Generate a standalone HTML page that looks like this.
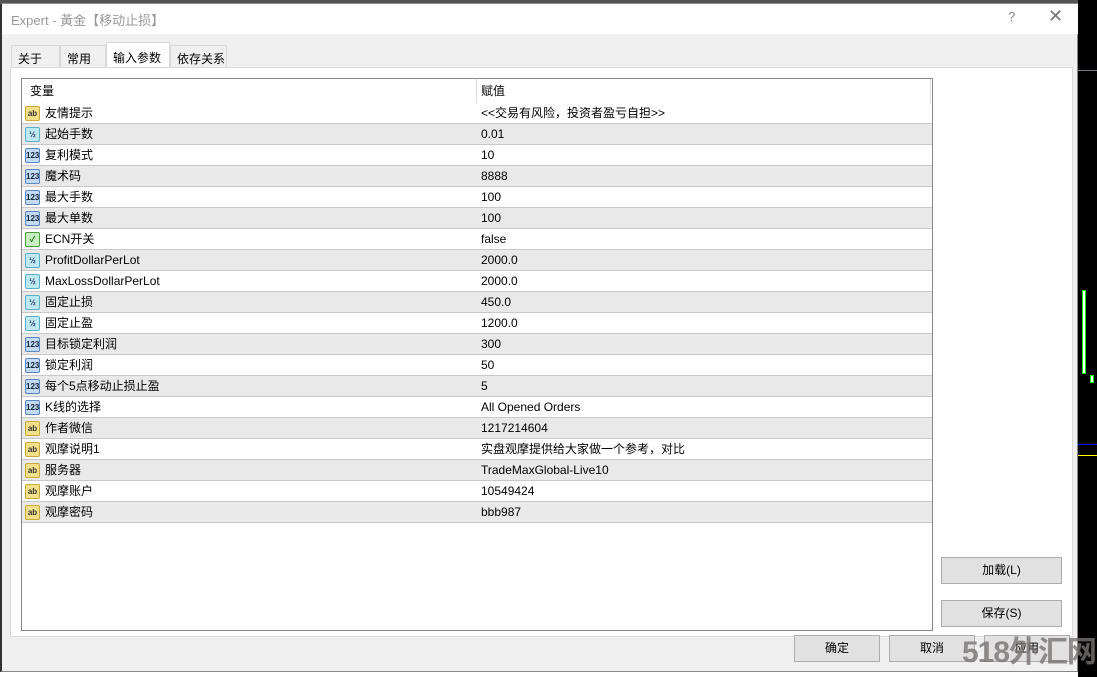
<!DOCTYPE html><html><head><meta charset="utf-8"><style>
*{margin:0;padding:0;box-sizing:border-box}
body{width:1097px;height:677px;overflow:hidden;background:#fff;font-family:"Liberation Sans","Noto Sans CJK SC",sans-serif;font-size:12px;color:#000;position:relative}
.abs{position:absolute}
.dlg{left:0;top:3px;width:1078px;height:669px;background:#f0f0f0;border:1px solid #888;border-left:2px solid #333}
.title{left:0;top:0;width:1076px;height:30px;background:#fff;color:#999;font-size:13px;padding:6px 0 0 9px}
.tab{top:41px;height:23px;border:1px solid #d9d9d9;border-bottom:none;background:#f0f0f0;padding:4px 0 0 6px}
.panel{left:8px;top:63px;width:1063px;height:570px;background:#fff;border:1px solid #d9d9d9}
.tbl{left:19px;top:74px;width:912px;height:553px;border:1px solid #888;background:#fff;overflow:hidden}
.row{position:absolute;left:0;width:910px;height:21px;border-bottom:1px solid #c8c8c8}
.row span{position:absolute;top:0;line-height:20px;height:20px}
.btn{height:27px;background:#e1e1e1;border:1px solid #adadad;text-align:center;line-height:25px}
.ic{position:absolute;left:3px;top:3px;width:15px;height:15px;border-radius:2px;font-size:8px;font-weight:bold;text-align:center;line-height:14px}
</style></head><body>
<div class="abs" style="left:1078px;top:0;width:19px;height:677px;background:#000"></div>
<div class="abs" style="left:1078px;top:70px;width:19px;height:1px;background:#778"></div>
<div class="abs" style="left:1082px;top:290px;width:4px;height:84px;background:#fff;border:1px solid #0f0"></div>
<div class="abs" style="left:1090px;top:375px;width:4px;height:8px;background:#fff;border:1px solid #0f0"></div>
<div class="abs" style="left:1078px;top:444px;width:19px;height:1px;background:#00f"></div>
<div class="abs" style="left:1078px;top:455px;width:19px;height:1px;background:#ff0"></div>
<div class="abs" style="left:0;top:0;width:1078px;height:3px;background:#555"></div>
<div class="abs dlg">
<div class="abs title">Expert - 黃金【移动止损】<span class="abs" style="left:1006px;top:5px;color:#888">?</span><span class="abs" style="left:1046px;top:2px;color:#777;font-size:18px">✕</span></div>
<div class="abs tab" style="left:9px;width:49px">关于</div>
<div class="abs tab" style="left:58px;width:46px">常用</div>
<div class="abs tab" style="left:104px;width:64px;top:38px;height:26px;background:#fff;padding-top:6px">输入参数</div>
<div class="abs tab" style="left:168px;width:57px">依存关系</div>
<div class="abs panel"></div>
<div class="abs tbl">
<div class="row" style="top:0;height:24px;border-bottom:none"><span style="left:8px;top:2px">变量</span><span style="left:459px;top:2px">赋值</span></div>
<div class="abs" style="left:454px;top:0;width:1px;height:24px;background:#ddd"></div>
<div class="abs" style="left:908px;top:0;width:1px;height:24px;background:#ddd"></div>
<div id="rows"></div>
</div>
<div class="abs btn" style="left:939px;top:553px;width:121px">加载(L)</div>
<div class="abs btn" style="left:939px;top:596px;width:121px">保存(S)</div>
<div class="abs btn" style="left:792px;top:631px;width:86px">确定</div>
<div class="abs btn" style="left:887px;top:631px;width:86px">取消</div>
<div class="abs btn" style="left:982px;top:631px;width:86px">应用</div>
</div>
<div class="abs" style="left:962px;top:636px;font-size:30px;line-height:34px;font-weight:bold;color:rgba(120,115,115,.8);letter-spacing:-1px;white-space:nowrap">518外汇网</div>
<script>
var d=[["ab","友情提示","<<交易有风险，投资者盈亏自担>>"],["h","起始手数","0.01"],["n","复利模式","10"],["n","魔术码","8888"],["n","最大手数","100"],["n","最大单数","100"],["b","ECN开关","false"],["h","ProfitDollarPerLot","2000.0"],["h","MaxLossDollarPerLot","2000.0"],["h","固定止损","450.0"],["h","固定止盈","1200.0"],["n","目标锁定利润","300"],["n","锁定利润","50"],["n","每个5点移动止损止盈","5"],["n","K线的选择","All Opened Orders"],["ab","作者微信","1217214604"],["ab","观摩说明1","实盘观摩提供给大家做一个参考，对比"],["ab","服务器","TradeMaxGlobal-Live10"],["ab","观摩账户","10549424"],["ab","观摩密码","bbb987"]];
var h="";d.forEach(function(r,i){var st={ab:"background:#f3e08a;border:1px solid #c9a93a;color:#333",h:"background:#bfe9f2;border:1px solid #5ab0c8;color:#236",n:"background:#c4d9f3;border:1px solid #5a86c4;color:#123",b:"background:#c8efc0;border:1px solid #4a9a40;color:#161"}[r[0]];var t={ab:"ab",h:"½",n:"123",b:"✓"}[r[0]];
h+='<div class="row" style="top:'+(24+i*21)+'px;background:'+(i%2?'#e9e9e9':'#fff')+'"><div class="ic" style="'+st+'">'+t+'</div><span style="left:23px">'+r[1]+'</span><span style="left:459px">'+r[2].replace(/</g,"&lt;").replace(/>/g,"&gt;")+'</span></div>'});
document.getElementById("rows").innerHTML=h;
</script>
</body></html>
